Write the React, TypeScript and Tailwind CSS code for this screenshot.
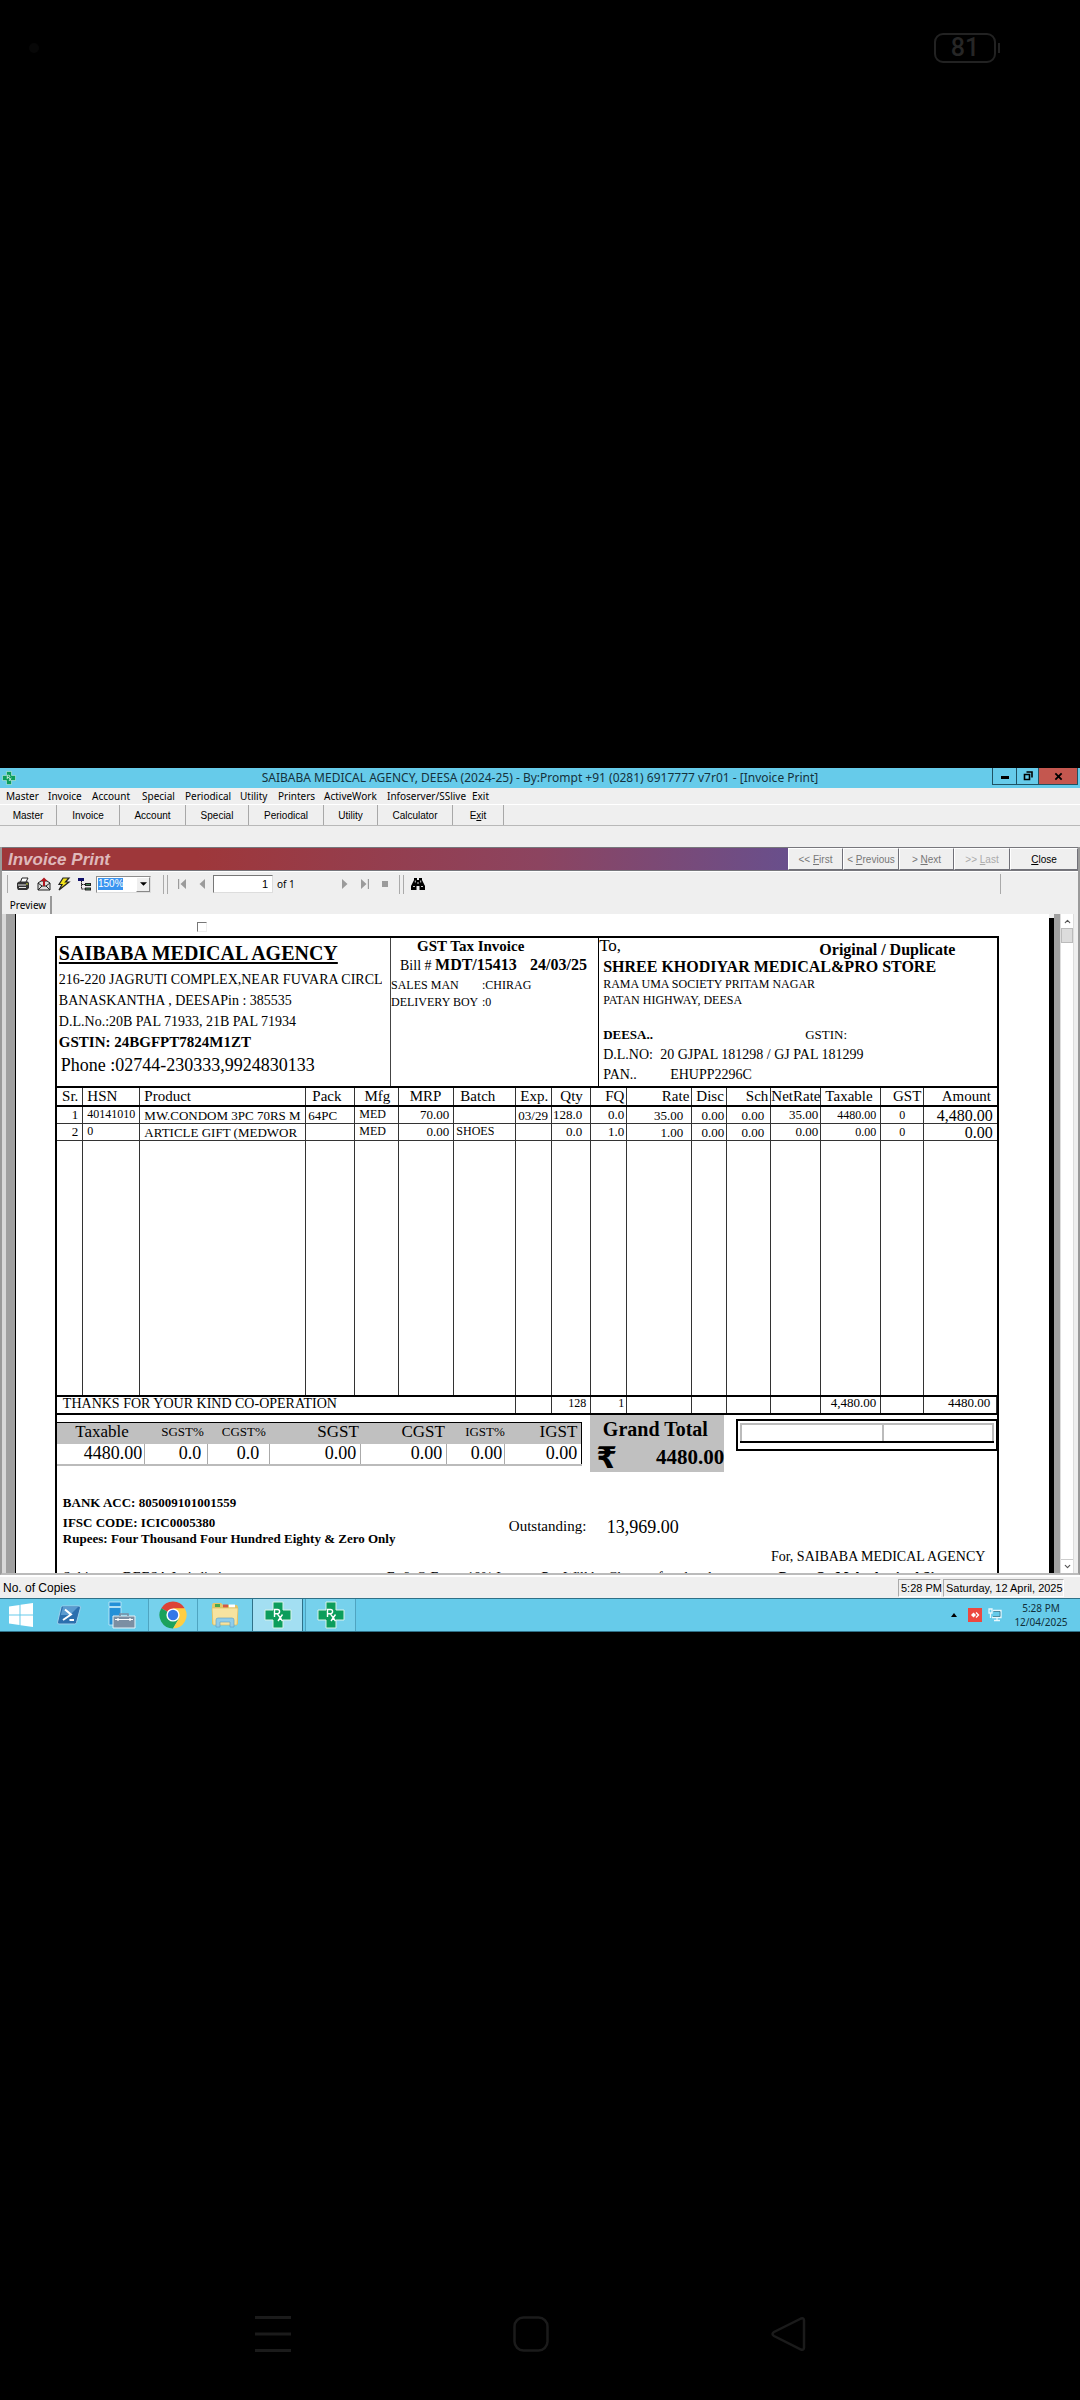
import { ChevronDown, ChevronUp } from 'lucide-react'

const menus = [
  { label: 'Master', width: 'w-[42px]' },
  { label: 'Invoice', width: 'w-[44px]' },
  { label: 'Account', width: 'w-[50px]' },
  { label: 'Special', width: 'w-[43px]' },
  { label: 'Periodical', width: 'w-[55px]' },
  { label: 'Utility', width: 'w-[38px]' },
  { label: 'Printers', width: 'w-[46px]' },
  { label: 'ActiveWork', width: 'w-[63px]' },
  { label: 'Infoserver/SSlive', width: 'w-[85px]' },
  { label: 'Exit', width: 'w-[30px]' },
]

const shortcuts = [
  { label: 'Master', width: 'w-[57px]' },
  { label: 'Invoice', width: 'w-[63px]' },
  { label: 'Account', width: 'w-[66px]' },
  { label: 'Special', width: 'w-[63px]' },
  { label: 'Periodical', width: 'w-[75px]' },
  { label: 'Utility', width: 'w-[54px]' },
  { label: 'Calculator', width: 'w-[75px]' },
]

const columns = [
  { label: 'Sr.', col: 'w-[26px]', head: 'text-right pr-1' },
  { label: 'HSN', col: 'w-[57px]', head: 'pl-1' },
  { label: 'Product', col: 'w-[166px]', head: 'pl-1' },
  { label: 'Pack', col: 'w-[49px]', head: 'pl-1.5' },
  { label: 'Mfg', col: 'w-[44px]', head: 'text-right pr-2' },
  { label: 'MRP', col: 'w-[55px]', head: 'text-right pr-3' },
  { label: 'Batch', col: 'w-[62px]', head: 'pl-1.5' },
  { label: 'Exp.', col: 'w-[36px]', head: 'pl-1' },
  { label: 'Qty', col: 'w-[39px]', head: 'pl-2' },
  { label: 'FQ', col: 'w-[36px]', head: 'text-right pr-0.5 text-[14px]' },
  { label: 'Rate', col: 'w-[65px]', head: 'text-right pr-0.5' },
  { label: 'Disc', col: 'w-[35px]', head: 'pl-1' },
  { label: 'Sch', col: 'w-[44px]', head: 'text-right pr-0.5' },
  { label: 'NetRate', col: 'w-[50px]', head: 'text-right pr-0.5 text-[13px]' },
  { label: 'Taxable', col: 'w-[60px]', head: 'pl-1' },
  { label: 'GST', col: 'w-[43px]', head: 'text-right pr-0.5' },
  { label: 'Amount', col: 'w-[73px]', head: 'text-right pr-1.5' },
]

const cellStyles = [
  'text-right pr-1 text-[13px]',
  'pl-1 text-[12px] pb-0.5',
  'pl-1 text-[13px] pt-0.5',
  'pl-0.5 text-[13px] pt-0.5',
  'pl-1 text-[12px] pb-0.5',
  'text-right pr-1 text-[13px]',
  'pl-0.5 text-[12px] pb-0.5',
  'pl-0.5 text-[13px] pt-0.5',
  'text-right pr-2 text-[13px]',
  'text-right pr-0.5 text-[13px]',
  'text-right pr-2 text-[13px] pt-0.5',
  'text-right pr-0.5 text-[13px] pt-0.5',
  'text-right pr-1.5 text-[13px] pt-0.5',
  'text-right pr-0.5 text-[13px]',
  'text-right pr-1 text-[12px]',
  'text-center text-[12px]',
  'text-right pr-1 text-[16px] pt-0.5',
]

const items = [
  ['1', '40141010', 'MW.CONDOM 3PC 70RS M', '64PC', 'MED', '70.00', '', '03/29', '128.0', '0.0', '35.00', '0.00', '0.00', '35.00', '4480.00', '0', '4,480.00'],
  ['2', '0', 'ARTICLE GIFT (MEDWOR', '', 'MED', '0.00', 'SHOES', '', '0.0', '1.0', '1.00', '0.00', '0.00', '0.00', '0.00', '0', '0.00'],
]

const taxes = [
  { label: 'Taxable', value: '4480.00', col: 'w-[88px]', head: 'text-[17px] pr-4', cell: 'pr-0.5' },
  { label: 'SGST%', value: '0.0', col: 'w-[63px]', head: 'text-[13px] pr-1', cell: 'pr-1.5' },
  { label: 'CGST%', value: '0.0', col: 'w-[62px]', head: 'text-[13px] pr-1', cell: 'pr-2.5' },
  { label: 'SGST', value: '0.00', col: 'w-[91px]', head: 'text-[17px] pr-0.5', cell: 'pr-1' },
  { label: 'CGST', value: '0.00', col: 'w-[86px]', head: 'text-[17px] pr-0.5', cell: 'pr-1' },
  { label: 'IGST%', value: '0.00', col: 'w-[58px]', head: 'text-[13px]', cell: 'pr-0.5' },
  { label: 'IGST', value: '0.00', col: 'w-[77px]', head: 'text-[17px] pr-1', cell: 'pr-1' },
]

function RxIcon({ className }: { className: string }) {
  return (
    <svg viewBox="0 0 28 28" className={className} aria-hidden="true">
      <path d="M9 1h10v8h8v10h-8v8H9v-8H1V9h8z" fill="#0c9d5b" stroke="#d8f3ea" strokeWidth="1" />
      <path d="M10.500 16V8.500h3a2 2 0 0 1 0 4.200h-3M13.200 12.700l5.300 7.300M18.500 13.500l-4.500 6.500" fill="none" stroke="#fff" strokeWidth="1.400" />
    </svg>
  )
}

function TitleBar() {
  return (
    <header className="relative flex h-5 items-center bg-[#66cbea] pr-4 text-[#15323c]">
      <RxIcon className="ml-0.5 size-[14px]" />
      <h1 className="flex-1 text-center font-['Noto_Sans',sans-serif] text-[12px] leading-5 whitespace-nowrap">
        SAIBABA MEDICAL AGENCY, DEESA (2024-25) - By:Prompt +91 (0281) 6917777 v7r01 - [Invoice Print]
      </h1>
      <div className="absolute top-0 right-0.5 flex h-[17px] border border-t-0 border-[#1f5263] text-black">
        <button aria-label="Minimize" className="flex w-6 items-center justify-center border-r border-[#1f5263]">
          <svg viewBox="0 0 10 10" className="size-[10px]"><path d="M1 5h8v3H1z" /></svg>
        </button>
        <button aria-label="Restore" className="flex w-[22px] items-center justify-center border-r border-[#1f5263]">
          <svg viewBox="0 0 10 10" className="size-[10px]"><path d="M1.500 3.500h5v5h-5zM3.500 1h5.500v5.500" fill="none" stroke="#000" strokeWidth="1.600" /></svg>
        </button>
        <button aria-label="Close window" className="flex w-[38px] items-center justify-center bg-[#c4574f]">
          <svg viewBox="0 0 10 10" className="size-[9px]"><path d="M1.500 1.500l7 7M8.500 1.500l-7 7" stroke="#000" strokeWidth="2" /></svg>
        </button>
      </div>
    </header>
  )
}

function MenuBars() {
  return (
    <>
      <nav className="flex h-[17px] items-center border-b border-white pl-1.5 font-['Noto_Sans',sans-serif] text-[10px]">
        {menus.map((menu) => (
          <button key={menu.label} className={`${menu.width} text-left whitespace-nowrap`}>{menu.label}</button>
        ))}
      </nav>
      <nav className="flex h-[21px] items-stretch border-b border-[#b8b8b8] text-[10px]">
        {shortcuts.map((item) => (
          <button key={item.label} className={`${item.width} border-r border-[#a8a8a8]`}>{item.label}</button>
        ))}
        <button className="w-[51px] border-r border-[#a8a8a8]">E<u>x</u>it</button>
      </nav>
      <div className="h-[21px]" />
    </>
  )
}

function PrintHeader() {
  return (
    <div className="flex h-6 items-stretch border-y border-[#77777c] bg-[linear-gradient(90deg,#9e373a_0%,#9e373a_18%,#8c4460_50%,#694f8c_73%,#694f8c_100%)] text-[10px]">
      <h2 className="flex-1 pl-1.5 text-[17px] leading-[24px] font-bold text-[#dfb9bb] italic">Invoice Print</h2>
      <button disabled className="w-[55px] border border-[#707078] border-t-white border-l-white bg-[#efefef] text-[#777]">&lt;&lt; <u>F</u>irst</button>
      <button disabled className="w-14 border border-[#707078] border-t-white border-l-white bg-[#efefef] text-[#777]">&lt; <u>P</u>revious</button>
      <button disabled className="w-[55px] border border-[#707078] border-t-white border-l-white bg-[#efefef] text-[#777]">&gt; <u>N</u>ext</button>
      <button disabled className="w-14 border border-[#707078] border-t-white border-l-white bg-[#efefef] text-[#aaa]">&gt;&gt; <u>L</u>ast</button>
      <button className="w-[68px] border border-[#707078] border-t-white border-l-white bg-[#efefef]"><u>C</u>lose</button>
    </div>
  )
}

function Toolbar() {
  return (
    <div className="flex h-[25px] items-center border-t border-white pl-1 text-[10px]">
      <span className="h-[18px] w-0.5 border-r border-[#aaa]" />
      <button aria-label="Print" className="ml-2">
        <svg viewBox="0 0 14 14" className="size-[14px]"><path d="M4.500 5l1.500-4h6l-2 4" fill="#fff" stroke="#222" /><path d="M1 6l2-1.500h9L13 6v5l-2 2H2l-1-2z" fill="#333" /><path d="M2 8h8M3 10.500h7" stroke="#e4e4e4" /><path d="M10 7h2" stroke="#d4d83c" /></svg>
      </button>
      <button aria-label="Export" className="ml-[7px]">
        <svg viewBox="0 0 14 14" className="size-[14px]"><path d="M1 6l3-2h6l3 2v7H1z" fill="#ddd" stroke="#222" /><path d="M1 13l4-4h4l4 4M1 6l4 3M13 6l-4 3" fill="none" stroke="#222" /><path d="M6 9V4H3.500L7 .5 10.500 4H8v5z" fill="#b01820" /></svg>
      </button>
      <button aria-label="Refresh" className="ml-[6px]">
        <svg viewBox="0 0 14 14" className="size-[14px]"><path d="M6 1h6L8.500 5H12L2 13l3-5.500H2z" fill="#f2e31c" stroke="#222" strokeWidth="1.200" /></svg>
      </button>
      <button aria-label="Toggle group tree" className="ml-[7px]">
        <svg viewBox="0 0 14 14" className="size-[14px]"><path d="M0 1h6v3H0z" fill="#10106a" /><path d="M3.500 4v8H7M3.500 7.500H7" fill="none" stroke="#222" strokeDasharray="1.500 .5" /><path d="M7 6h6v3H7zM7 10.500h6v3H7z" fill="#222" /><path d="M8 7.500h4M8 12h4" stroke="#49a060" strokeWidth=".8" /></svg>
      </button>
      <label className="ml-1 flex h-[17px] w-[55px] items-center border border-[#8d8d8d] border-r-[#ddd] border-b-[#ddd] bg-white pl-px">
        <select aria-label="Zoom" className="h-3 w-[25px] appearance-none bg-[#3a94f0] text-[10px] leading-3 text-white">
          <option>150%</option>
        </select>
        <span className="ml-auto flex h-full w-[14px] items-center justify-center border border-[#888] border-t-white border-l-white bg-[#efefef]">
          <svg viewBox="0 0 8 4" className="h-1 w-[7px]"><path d="M0 0h8L4 4z" /></svg>
        </span>
      </label>
      <span className="ml-3 h-[19px] w-[5px] border-x border-[#aaa]" />
      <button aria-label="First page" className="ml-[10px]">
        <svg viewBox="0 0 8 10" className="h-[10px] w-2" fill="#9b9b9b"><path d="M0 0h1.200v10H0zM8 0v10L2.500 5z" /></svg>
      </button>
      <button aria-label="Previous page" className="ml-3">
        <svg viewBox="0 0 8 10" className="h-[10px] w-2" fill="#9b9b9b"><path d="M7 0v10L1.500 5z" /></svg>
      </button>
      <input aria-label="Page number" defaultValue="1" className="ml-[7px] h-[18px] w-[60px] border border-[#777] border-r-[#ddd] border-b-[#ddd] bg-white pr-1 text-right text-[11px]" />
      <span className="ml-1 w-16 font-['Noto_Sans',sans-serif] text-[10px]">of 1</span>
      <button aria-label="Next page">
        <svg viewBox="0 0 8 10" className="h-[10px] w-2" fill="#9b9b9b"><path d="M1 0v10l5.500-5z" /></svg>
      </button>
      <button aria-label="Last page" className="ml-3">
        <svg viewBox="0 0 8 10" className="h-[10px] w-2" fill="#9b9b9b"><path d="M0 0v10l5.500-5zM6.800 0H8v10H6.800z" /></svg>
      </button>
      <button aria-label="Stop" className="ml-3">
        <svg viewBox="0 0 8 8" className="size-2" fill="#9b9b9b"><path d="M1 1h6v6H1z" /></svg>
      </button>
      <span className="ml-[10px] h-[19px] w-[5px] border-x border-[#aaa]" />
      <button aria-label="Search text" className="ml-[7px]">
        <svg viewBox="0 0 14 12" className="h-3 w-[14px]"><path d="M3 0h3v2h2V0h3v2l3 6v4H8.500V8h-3v4H0V8l3-6z" /><path d="M2 8.500h2M10 8.500h2M4.300 2.500v2M9.700 2.500v2M7 4v2" stroke="#fff" strokeWidth=".8" /></svg>
      </button>
      <span className="mr-[77px] ml-auto h-5 w-px bg-[#aaa]" />
    </div>
  )
}

function InvoiceHead() {
  return (
    <div className="grid min-h-[148px] grid-cols-[334fr_208fr_398fr] whitespace-nowrap">
      <section className="overflow-hidden border-r border-[#444] pt-0.5 pr-2 pl-0.5 text-[14px] leading-[21px]">
        <h3 className="pb-0.5 text-[20px] leading-[27px] font-bold underline decoration-2 underline-offset-2">SAIBABA MEDICAL AGENCY</h3>
        <p className="overflow-hidden">216-220 JAGRUTI COMPLEX,NEAR FUVARA CIRCLE</p>
        <p>BANASKANTHA , DEESAPin : 385535</p>
        <p>D.L.No.:20B PAL 71933, 21B PAL 71934</p>
        <p className="text-[15px] font-bold">GSTIN: 24BGFPT7824M1ZT</p>
        <p className="pl-0.5 text-[18px] leading-6">Phone :02744-230333,9924830133</p>
      </section>
      <section className="border-r border-black text-[12px] leading-[17px]">
        <h3 className="pl-[26px] text-[15px] leading-4 font-bold">GST Tax Invoice</h3>
        <p className="flex items-baseline pl-[9px] text-[16px] leading-[22px] font-bold">
          <span className="w-[35px] text-[14px] font-normal">Bill #</span>
          <span className="w-[95px]">MDT/15413</span>
          <span>24/03/25</span>
        </p>
        <p className="flex"><span className="w-[91px]">SALES MAN</span>:CHIRAG</p>
        <p className="flex"><span className="w-[91px]">DELIVERY BOY</span>:0</p>
      </section>
      <section className="pl-1 text-[14px] leading-5">
        <div className="flex items-start justify-between">
          <p className="-ml-1 text-[17px] leading-4">To,</p>
          <p className="mr-[42px] pt-1 text-[16px] leading-4 font-bold">Original / Duplicate</p>
        </div>
        <p className="text-[16px] leading-[18px] font-bold">SHREE KHODIYAR MEDICAL&amp;PRO STORE</p>
        <p className="text-[12px] leading-4">RAMA UMA SOCIETY PRITAM NAGAR</p>
        <p className="text-[12px] leading-[17px]">PATAN HIGHWAY, DEESA</p>
        <p className="flex pt-4"><b className="w-[202px] text-[13px]">DEESA..</b><span className="text-[13px]">GSTIN:</span></p>
        <p className="flex"><span className="w-[57px]">D.L.NO:</span>20 GJPAL 181298 / GJ PAL 181299</p>
        <p className="flex"><span className="w-[67px]">PAN..</span>EHUPP2296C</p>
      </section>
    </div>
  )
}

function ItemsTable() {
  return (
    <table className="w-full table-fixed border-collapse border-y-2 border-black whitespace-nowrap">
      <colgroup>
        {columns.map((c) => <col key={c.label} className={c.col} />)}
      </colgroup>
      <thead>
        <tr className="h-[19px] border-b-2 border-black">
          {columns.map((c) => (
            <th key={c.label} className={`border-r border-[#333] p-0 text-left text-[15px] leading-[17px] font-normal last:border-r-0 ${c.head}`}>{c.label}</th>
          ))}
        </tr>
      </thead>
      <tbody>
        {items.map((row) => (
          <tr key={row[0]} className="h-[17px] border-b border-[#333]">
            {row.map((value, i) => (
              <td key={i} className={`border-r border-[#333] last:border-r-0 ${cellStyles[i]}`}>
                <div className="h-3.5 leading-[14px]">{value}</div>
              </td>
            ))}
          </tr>
        ))}
        <tr className="h-[255px]">
          {columns.map((c) => <td key={c.label} className="border-r border-[#333] last:border-r-0" />)}
        </tr>
      </tbody>
      <tfoot>
        <tr className="h-[18px] border-t-2 border-black text-[13px] leading-[12px] *:border-r *:border-[#333] *:pt-0 *:align-top">
          <td colSpan={7} className="pl-1.5 text-[14px] leading-[14px]">THANKS FOR YOUR KIND CO-OPERATION</td>
          <td />
          <td className="pr-1 text-right text-[12px]">128</td>
          <td className="pr-0.5 text-right text-[12px]">1</td>
          <td />
          <td />
          <td />
          <td />
          <td className="pr-1 text-right">4,480.00</td>
          <td />
          <td className="border-r-0 pr-1.5 text-right">4480.00</td>
        </tr>
      </tfoot>
    </table>
  )
}

function Totals() {
  return (
    <div className="grid grid-cols-[533fr_146fr_261fr] items-start whitespace-nowrap">
      <div className="pt-[7px] pr-2">
        <table className="w-full table-fixed border-collapse border-t border-b-2 border-t-black border-b-[#bbb]">
          <colgroup>
            {taxes.map((t) => <col key={t.label} className={t.col} />)}
          </colgroup>
          <thead>
            <tr className="h-[21px] bg-[#c0c0c0]">
              {taxes.map((t) => <th key={t.label} className={`pb-1 text-right leading-[17px] font-normal last:border-r last:border-black ${t.head}`}>{t.label}</th>)}
            </tr>
          </thead>
          <tbody>
            <tr className="h-[21px] text-[18px]">
              {taxes.map((t) => <td key={t.label} className={`border-r border-[#aaa] pb-0.5 text-right leading-[18px] last:border-black ${t.cell}`}>{t.value}</td>)}
            </tr>
          </tbody>
        </table>
      </div>
      <div className="pr-3">
        <div className="bg-[#c0c0c0] font-bold">
          <p className="pr-1 text-center text-[20px] leading-[28px]">Grand Total</p>
          <p className="flex items-center justify-between pl-1.5 text-[21px] leading-[29px]">
            <span className="font-['DejaVu_Sans',sans-serif] text-[30px]">₹</span>
            4480.00
          </p>
        </div>
      </div>
      <div className="mt-1 h-8 border-2 border-r border-black px-0.5 pt-0.5">
        <div className="grid h-[18px] grid-cols-[143fr_110fr] border-2 border-b-0 border-[#bbb]">
          <span className="border-r-2 border-[#bbb]" />
        </div>
        <div className="h-0.5 bg-black" />
      </div>
    </div>
  )
}

function InvoiceFoot() {
  return (
    <div className="pt-5 pl-1.5 whitespace-nowrap">
      <div className="flex h-14">
        <div className="w-[446px] text-[13px] font-bold">
          <p className="leading-[22px]">BANK ACC: 805009101001559</p>
          <p className="leading-[18px]">IFSC CODE: ICIC0005380</p>
          <p className="leading-[14px]">Rupees: Four Thousand Four Hundred Eighty &amp; Zero Only</p>
        </div>
        <p className="w-[98px] pt-6 text-[15px] leading-5">Outstanding:</p>
        <p className="pt-6 text-[18px] leading-[22px]">13,969.00</p>
      </div>
      <p className="pr-3 text-right text-[14px] leading-[18px]">For, SAIBABA MEDICAL AGENCY</p>
      <div className="flex pt-0.5 text-[14px] leading-5">
        <p className="w-[324px]">Subject to DEESA Jurisdiction</p>
        <p className="w-[392px]">E. &amp; O.E. &nbsp; &nbsp; &nbsp; 18% Interest Per Will be Charge after due date</p>
        <p className="font-bold">Prop. Or M.Authorised Signatory</p>
      </div>
    </div>
  )
}

function Preview() {
  return (
    <div className="flex h-[659px] overflow-hidden border-l-4 border-[#d8d8d8] pr-1">
      <div className="w-[10px] border-r border-black bg-[#a0a0a0]" />
      <main className="flex-1 bg-white pt-2 pr-[50px] pl-[39px] font-['Liberation_Serif',serif] text-black">
        <input type="checkbox" aria-label="Select invoice" className="ml-[142px] block size-[10px] appearance-none border border-[#eee] border-t-[#777] border-l-[#777]" />
        <div className="mt-1 h-[660px] border-2 border-b-0 border-black">
          <InvoiceHead />
          <ItemsTable />
          <Totals />
          <InvoiceFoot />
        </div>
      </main>
      <div className="mt-1 w-[5px] bg-black" />
      <div className="w-1.5 bg-[#a0a0a0]" />
      <div className="flex w-[14px] flex-col border-x border-[#ddd] bg-white text-[#555]">
        <button aria-label="Scroll up" className="flex h-[14px] items-center justify-center"><ChevronUp size={9} strokeWidth={3} /></button>
        <div className="h-[15px] border border-[#bbb] bg-[#dcdcdc]" />
        <button aria-label="Scroll down" className="mt-auto flex h-[14px] items-center justify-center border-t border-[#ccc]"><ChevronDown size={9} strokeWidth={3} /></button>
      </div>
    </div>
  )
}

function Taskbar() {
  return (
    <footer className="flex h-[34px] items-stretch border-y border-[#2f7188] bg-[#66cbea]">
      <button aria-label="Start" className="flex w-[42px] items-center justify-center">
        <svg viewBox="0 0 24 24" className="size-6" fill="#fff"><path d="M0 3.500l10.500-1.500v9.500H0zM11.500 1.800L24 0v11.500H11.500zM0 12.500h10.500V22L0 20.500zM11.500 12.500H24V24l-12.500-1.800z" /></svg>
      </button>
      <button aria-label="PowerShell" className="flex w-[53px] items-center justify-center">
        <svg viewBox="0 0 24 20" className="h-5 w-6"><path d="M5.500 1H22a1.500 1.500 0 0 1 1.400 2L19.500 17.500a2 2 0 0 1-2 1.500H2a1.500 1.500 0 0 1-1.400-2L4 2.500A2 2 0 0 1 5.500 1z" fill="#2b6fae" stroke="#9dd0ec" /><path d="M6 2h15l-8 8H3.800z" fill="#5a9bd0" /><path d="M8 4.500l6 5-8 5.500M12.500 15H17" fill="none" stroke="#fff" strokeWidth="2" /></svg>
      </button>
      <button aria-label="Server Manager" className="flex w-[53px] items-center justify-center">
        <svg viewBox="0 0 28 28" className="size-7"><path d="M1 1h12v4.500H1zM1 6.500h12V24H1z" fill="#2290d8" stroke="#c9ecf9" strokeWidth=".8" /><path d="M5 15h22v12H5z" fill="#7b8fa3" stroke="#e6f3f8" /><path d="M12 15v-2h8v2" fill="none" stroke="#7b8fa3" strokeWidth="1.600" /><path d="M7 18.500h18M10 17v3M22 17v3" stroke="#fff" strokeWidth="1.200" /></svg>
      </button>
      <button aria-label="Chrome" className="flex w-[50px] items-center justify-center border-x border-[#4fa4c0] bg-[#76d1ec]">
        <svg viewBox="0 0 28 28" className="size-7">
          <path d="M14 14L2.300 7.200a13.500 13.500 0 0 1 23.400 0z" fill="#dc4437" />
          <path d="M14 14L2.300 7.200A13.500 13.500 0 0 0 14 27.500l6-10z" fill="#1ba25c" />
          <path d="M14 27.500A13.500 13.500 0 0 0 25.700 7.200H14l6 10z" fill="#ffce42" />
          <circle cx="14" cy="14" r="6.600" fill="#fff" /><circle cx="14" cy="14" r="5.200" fill="#3478e8" />
        </svg>
      </button>
      <button aria-label="File Explorer" className="flex w-[54px] items-center justify-center bg-[#76d1ec]">
        <svg viewBox="0 0 28 26" className="h-[26px] w-7"><path d="M1 3l1-2h8l2 2h14l1 2v17H1z" fill="#e3c668" /><path d="M4 2h5v3H4z" fill="#48a84d" /><path d="M12 2.500h5v3h-5z" fill="#d45a45" /><path d="M18 2.500h6v3h-6z" fill="#fff" /><path d="M1 6h26l-1 17H2z" fill="#f6e3a0" stroke="#d8b95a" strokeWidth=".6" /><path d="M5 25v-7q0-2 2-2h14q2 0 2 2v7h-4v-5H9v5z" fill="#90cdea" stroke="#5b9cc4" strokeWidth=".6" /></svg>
      </button>
      <button aria-label="Prompt" className="flex w-[51px] items-center justify-center border border-y-0 border-[#2f7188] bg-[#a3dff2]"><RxIcon className="size-7" /></button>
      <button aria-label="Prompt second window" className="ml-0.5 flex w-[51px] items-center justify-center border-x border-[#4fa4c0] bg-[#76d1ec]"><RxIcon className="size-7" /></button>
      <div className="mr-3 ml-auto flex items-center font-['Noto_Sans',sans-serif] text-[10px] text-[#10303a]">
        <svg viewBox="0 0 6 4" className="h-1 w-1.5"><path d="M3 0l3 4H0z" /></svg>
        <svg viewBox="0 0 14 14" className="ml-[11px] size-[14px]"><path d="M0 0h14v14H0z" fill="#ed4840" /><path d="M5.500 4.500L8 7l-2.500 2.500L3 7z" fill="#fff" /><path d="M8 4.500L10.500 7 8 9.500" fill="none" stroke="#fff" strokeWidth="1.300" /></svg>
        <svg viewBox="0 0 14 14" className="ml-1.5 size-[14px]" fill="none" stroke="#e8f8fd" strokeWidth="1.300"><path d="M5 2.500h8v7H4M9 10v2.500M6 12.500h6M1 1h3v4H1zM2.500 5v5" /><path d="M5.500 3.500h6.500v5H5" stroke="#376b80" strokeWidth=".7" /></svg>
        <time className="ml-3 w-[54px] text-center leading-[14px] whitespace-nowrap">5:28 PM<br />12/04/2025</time>
      </div>
    </footer>
  )
}

export default function App() {
  return (
    <div className="flex min-h-screen flex-col bg-black">
      <div className="flex h-24 items-center justify-between pr-20 pl-[29px]">
        <span className="size-[10px] rounded-full bg-[#070707]" />
        <div className="flex items-center gap-0.5">
          <span className="flex h-[30px] w-[62px] items-center justify-center rounded-[9px] border-2 border-[#222] font-[Roboto,sans-serif] text-[25px] font-medium text-[#262626]">81</span>
          <span className="h-[10px] w-0.5 bg-[#222]" />
        </div>
      </div>

      <div className="mt-[672px] bg-[#efefef] font-['Liberation_Sans',sans-serif] text-black">
        <TitleBar />
        <MenuBars />
        <div className="border-x-2 border-x-[#9a9a9a] border-b-2 border-b-[#bbb]">
          <PrintHeader />
          <Toolbar />
          <div className="flex h-[18px] items-stretch pl-1">
            <button className="w-[46px] border-r-2 border-[#999] font-['Noto_Sans',sans-serif] text-[10px] leading-[17px]">Preview</button>
          </div>
          <Preview />
        </div>
        <div className="flex h-[23px] items-center gap-0.5 border-t-2 border-white pr-4 pl-[3px] text-[11px] whitespace-nowrap">
          <p className="mr-auto text-[12px]">No. of Copies</p>
          <p className="w-[43px] border border-[#aaa] border-r-white border-b-white pl-0.5 leading-4">5:28 PM</p>
          <p className="w-[121px] border border-[#aaa] border-r-white border-b-white pl-0.5 leading-4">Saturday, 12 April, 2025</p>
        </div>
        <Taskbar />
      </div>

      <nav className="mt-auto flex h-[132px] items-center justify-between pr-[274px] pl-[255px] text-[#1b1b1b]">
        <button aria-label="Recent apps"><svg viewBox="0 0 36 36" className="size-9"><path d="M0 1.500h36M0 18h36M0 34.500h36" stroke="currentColor" strokeWidth="3" /></svg></button>
        <button aria-label="Home"><svg viewBox="0 0 36 36" className="size-9"><rect x="1.500" y="1.500" width="33" height="33" rx="9" fill="none" stroke="currentColor" strokeWidth="2.500" /></svg></button>
        <button aria-label="Back"><svg viewBox="0 0 36 36" className="size-9"><path d="M31 2.500L4 16q-3 2 0 4l27 13.500q3 1 3-2v-27q0-3-3-2z" fill="none" stroke="currentColor" strokeWidth="2.500" /></svg></button>
      </nav>
    </div>
  )
}
